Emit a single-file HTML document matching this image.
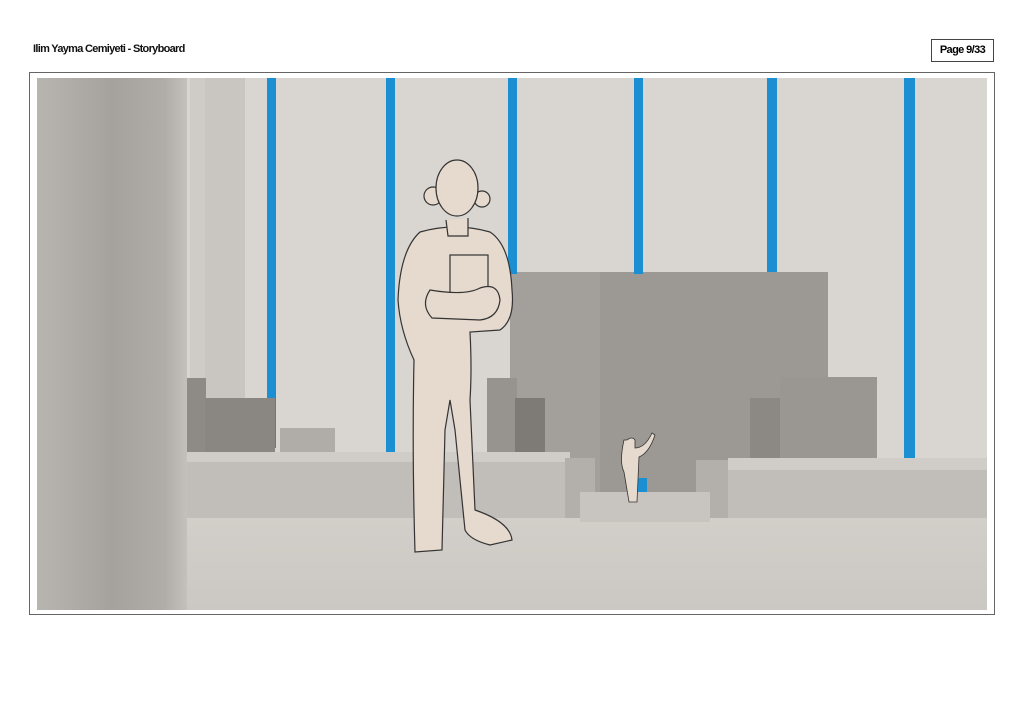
<!DOCTYPE html>
<html><head><style>
body{margin:0;width:1024px;height:723px;background:#fff;position:relative;overflow:hidden;font-family:"Liberation Sans",sans-serif}
.t{position:absolute;left:33px;top:43px;font-size:11px;font-weight:bold;letter-spacing:-0.7px;color:#111}
.p{position:absolute;left:931px;top:39px;width:63px;height:23px;border:1px solid #444;box-sizing:border-box;font-size:11px;font-weight:bold;letter-spacing:-0.6px;text-align:center;line-height:21px}
.f{position:absolute;left:29px;top:72px;width:966px;height:543px;border:1px solid #666;box-sizing:border-box}
svg{position:absolute;left:37px;top:78px}
</style></head><body>
<div class="t">Ilim Yayma Cemiyeti - Storyboard</div>
<div class="p">Page 9/33</div>
<div class="f"></div>
<svg width="950" height="532" viewBox="37 78 950 532">
<defs>
<linearGradient id="lp" x1="0" x2="1"><stop offset="0" stop-color="#b8b5b0"/><stop offset="0.5" stop-color="#a5a29d"/><stop offset="0.85" stop-color="#b0ada8"/><stop offset="1" stop-color="#c4c0bb"/></linearGradient>
<linearGradient id="fl" y1="0" y2="1" x1="0" x2="0"><stop offset="0" stop-color="#d2cec9"/><stop offset="1" stop-color="#cbc7c2"/></linearGradient>
</defs>
<rect x="37" y="78" width="950" height="532" fill="#d9d5d0"/>
<rect x="190" y="78" width="55" height="400" fill="#cfcbc6"/>
<rect x="205" y="78" width="40" height="400" fill="#c9c5c0"/>
<rect x="510" y="272" width="318" height="220" fill="#a3a09c"/>
<rect x="600" y="272" width="228" height="220" fill="#9c9995"/>
<g fill="#1b8fd1">
<rect x="267" y="78" width="9" height="370"/><rect x="386" y="78" width="9" height="375"/>
<rect x="508" y="78" width="9" height="196"/><rect x="634" y="78" width="9" height="196"/>
<rect x="767" y="78" width="10" height="194"/><rect x="904" y="78" width="11" height="382"/>
<rect x="638" y="478" width="9" height="18"/></g>
<rect x="780" y="377" width="97" height="82" fill="#9a9793"/>
<rect x="750" y="398" width="30" height="62" fill="#8c8985"/>
<rect x="186" y="378" width="20" height="75" fill="#8e8b87"/>
<rect x="205" y="398" width="70" height="55" fill="#8a8783"/>
<rect x="280" y="428" width="55" height="25" fill="#b0ada9"/>
<rect x="487" y="378" width="30" height="80" fill="#97948f"/>
<rect x="515" y="398" width="30" height="60" fill="#7e7b77"/>
<rect x="186" y="452" width="384" height="70" fill="#c1bdb8"/>
<rect x="186" y="452" width="384" height="10" fill="#d0ccc7"/>
<rect x="565" y="458" width="30" height="65" fill="#b3b0ab"/>
<rect x="728" y="458" width="259" height="70" fill="#c1bdb8"/>
<rect x="728" y="458" width="259" height="12" fill="#d0ccc7"/>
<rect x="696" y="460" width="32" height="65" fill="#b3b0ab"/>
<rect x="37" y="518" width="950" height="92" fill="url(#fl)"/>
<rect x="580" y="492" width="130" height="30" fill="#c8c4bf"/>
<rect x="37" y="78" width="150" height="532" fill="url(#lp)"/>
<g fill="#e6d9cd" stroke="#333" stroke-width="1.2">
<path d="M420 232 Q455 222 490 232 Q510 245 512 290 Q515 320 500 330 L470 332 Q472 370 470 400 L475 510 Q510 522 512 540 L490 545 Q470 540 465 530 L455 430 L450 400 L445 430 L442 550 L415 552 Q412 450 414 360 Q400 330 398 300 Q400 250 420 232 Z"/>
<circle cx="433" cy="196" r="9"/><circle cx="482" cy="199" r="8"/>
<ellipse cx="457" cy="188" rx="21" ry="28"/>
<path d="M446 220 L448 236 L468 236 L468 218"/>
<rect x="450" y="255" width="38" height="48"/>
<path d="M430 290 Q465 296 480 288 Q498 282 500 300 Q498 318 480 320 L432 318 Q420 305 430 290 Z"/>
<path d="M627 440 q5-4 8 0 l0 8 q10 0 17-15 l3 2 q-6 18-16 22 l-2 45 l-8 0 l-5-30 q-5-10 0-32z" stroke-width="0.8"/>
</g>
</svg>
</body></html>
